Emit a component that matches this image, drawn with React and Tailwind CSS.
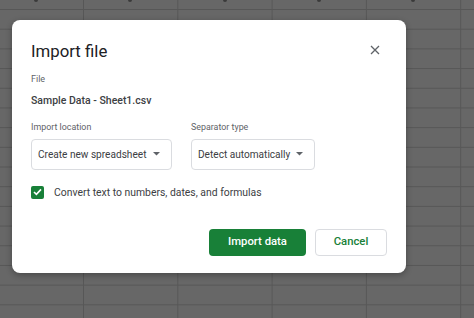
import React from 'react'

const COLS = [0, 1, 2, 3, 4]

function Caret() {
  return (
    <svg width="7" height="4" viewBox="0 0 7 4" className="shrink-0">
      <path d="M0 0 L7 0 L3.5 3.5 Z" fill="#5f6368" />
    </svg>
  )
}

function Select({ label, width }) {
  return (
    <div className={`flex items-center justify-between h-[31px] ${width} pl-[6px] pr-[11px] border border-[#dadce0] rounded-[4px]`}>
      <span className="text-[10.1px] text-[#3c4043] whitespace-nowrap">{label}</span>
      <Caret />
    </div>
  )
}

export default function App() {
  return (
    <div
      className="relative w-[474px] h-[318px] overflow-hidden bg-[#676767] bg-[linear-gradient(to_right,#575757_1px,transparent_1px),linear-gradient(to_bottom,#575757_1px,transparent_1px)] bg-[length:94.3px_19.7px] bg-[position:83px_9px]"
      style={{ fontFamily: 'Roboto, "Liberation Sans", sans-serif' }}
    >
      {/* column header letters, cut off at top */}
      <div className="flex ml-[-11px] h-[3px]">
        {COLS.map((c) => (
          <div key={c} className="w-[94.3px] flex justify-center">
            <div className="w-[4px] h-[2px] bg-[#3a3a3a] rounded-b-full" />
          </div>
        ))}
      </div>

      {/* dialog */}
      <div className="absolute left-[12px] top-[20px] w-[394px] h-[253px] bg-white rounded-[8px] shadow-[0_2px_6px_rgba(0,0,0,0.3)] px-[19px] pt-[19px] flex flex-col">
        <div className="flex items-center justify-between">
          <h1 className="text-[16.8px] leading-[24px] text-[#202124]">Import file</h1>
          <svg width="10" height="10" viewBox="0 0 10 10" className="mr-[7px] mt-[-2px]">
            <path d="M1 1 L9 9 M9 1 L1 9" stroke="#5f6368" strokeWidth="1.3" />
          </svg>
        </div>

        <div className="mt-[10px] text-[9px] text-[#5f6368]">File</div>
        <div className="mt-[6px] text-[10.5px] font-medium text-[#3c4043]">Sample Data - Sheet1.csv</div>

        <div className="flex gap-[19px] mt-[13px]">
          <div className="flex flex-col gap-[4px]">
            <span className="text-[8.9px] text-[#5f6368]">Import location</span>
            <Select label="Create new spreadsheet" width="w-[141px]" />
          </div>
          <div className="flex flex-col gap-[4px]">
            <span className="text-[8.9px] text-[#5f6368]">Separator type</span>
            <Select label="Detect automatically" width="w-[124px]" />
          </div>
        </div>

        <div className="flex items-center gap-[10px] mt-[15px]">
          <div className="w-[13px] h-[13px] rounded-[2px] bg-[#188038] flex items-center justify-center">
            <svg width="9" height="8" viewBox="0 0 9 8">
              <path d="M1 4 L3.4 6.4 L8 1.4" stroke="white" strokeWidth="1.6" fill="none" />
            </svg>
          </div>
          <span className="text-[10.4px] text-[#3c4043]">Convert text to numbers, dates, and formulas</span>
        </div>

        <div className="flex justify-end gap-[9px] mt-[29px]">
          <button className="w-[97px] h-[27px] rounded-[4px] bg-[#188038] text-white text-[11.3px] font-medium">Import data</button>
          <button className="w-[72px] h-[27px] rounded-[4px] border border-[#dadce0] bg-white text-[#188038] text-[11.3px] font-medium">Cancel</button>
        </div>
      </div>
    </div>
  )
}
